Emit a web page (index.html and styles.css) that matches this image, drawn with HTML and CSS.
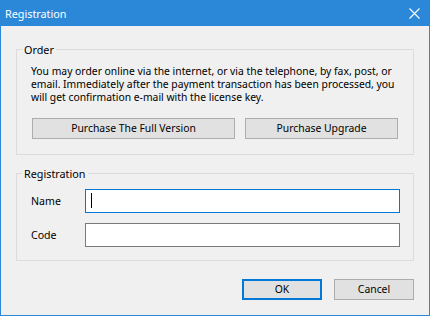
FILE: index.html
```html
<!DOCTYPE html>
<html>
<head>
<meta charset="utf-8">
<link rel="stylesheet" href="styles.css">
</head>
<body>
<div class="window">
  <div class="titlebar">
    <span class="title">Registration</span>
    <svg class="close" width="11" height="11" viewBox="0 0 11 11"><path d="M0.5 0.5 L10.5 10.5 M10.5 0.5 L0.5 10.5" stroke="#fff" stroke-width="1.1" fill="none"/></svg>
  </div>
  <div class="content">
    <fieldset class="group order">
      <legend>Order</legend>
      <p class="info">You may order online via the internet, or via the telephone, by fax, post, or<br>email. Immediately after the payment transaction has been processed, you<br>will get confirmation e-mail with the license key.</p>
      <div class="buyrow">
        <button class="btn full">Purchase The Full Version</button>
        <button class="btn upgrade">Purchase Upgrade</button>
      </div>
    </fieldset>
    <fieldset class="group reg">
      <legend>Registration</legend>
      <div class="field">
        <label class="lbl">Name</label>
        <div class="input focused"><span class="caret"></span></div>
      </div>
      <div class="field">
        <label class="lbl">Code</label>
        <div class="input"></div>
      </div>
    </fieldset>
    <div class="actions">
      <button class="btn dlg default">OK</button>
      <button class="btn dlg">Cancel</button>
    </div>
  </div>
</div>
</body>
</html>
```
FILE: styles.css
```css
html, body {
  margin: 0;
  padding: 0;
  background: #f0f0f0;
}
.window {
  width: 430px;
  height: 316px;
  box-sizing: border-box;
  border: 1px solid #2b88d8;
  background: #f0f0f0;
  font-family: "Segoe UI", "Noto Sans", "Open Sans", sans-serif;
  font-size: 10.6px;
  color: #000;
  overflow: hidden;
}
.titlebar {
  height: 25px;
  background: #2b88d8;
  display: flex;
  align-items: center;
  justify-content: space-between;
  padding-left: 4px;
}
.title {
  color: #fff;
  font-size: 10.8px;
  line-height: 15px;
}
.close {
  margin-right: 9px;
  display: block;
}
.content {
  padding: 0 15px;
  display: flex;
  flex-direction: column;
}
.group {
  margin: 0;
  padding: 0;
  border: 1px solid #dcdcdc;
  min-width: 0;
}
.group legend {
  margin-left: -9px;
  padding: 0 2px;
  line-height: 15px;
  font-size: 10.8px;
}
.order {
  margin-top: 16px;
  padding: 8px 15px 15px 14px;
}
.info {
  margin: 0;
  font-size: 10.35px;
  line-height: 13px;
  white-space: nowrap;
}
.buyrow {
  display: flex;
  gap: 10px;
  margin-top: 14px;
}
.btn {
  font-family: inherit;
  font-size: 10.4px;
  color: #000;
  background: #e1e1e1;
  border: 1px solid #adadad;
  height: 21px;
  padding: 0;
  margin: 0;
  line-height: 17px;
}
.full { width: 203px; margin-left: 1px; }
.upgrade { width: 153px; }
.reg {
  margin-top: 11px;
  padding: 8px 13px 13px 14px;
  display: flex;
  flex-direction: column;
  gap: 10px;
}
.field {
  display: flex;
  align-items: center;
}
.lbl {
  width: 54px;
}
.input {
  flex: 1;
  height: 24px;
  box-sizing: border-box;
  background: #fff;
  border: 1px solid #7a7a7a;
  position: relative;
}
.input.focused {
  border-color: #0078d7;
}
.caret {
  position: absolute;
  left: 5px;
  top: 3px;
  width: 1px;
  height: 15px;
  background: #000;
}
.actions {
  display: flex;
  justify-content: flex-end;
  gap: 12px;
  margin-top: 18px;
}
.dlg {
  width: 80px;
  box-sizing: border-box;
}
.default {
  border: 2px solid #0078d7;
}
```
